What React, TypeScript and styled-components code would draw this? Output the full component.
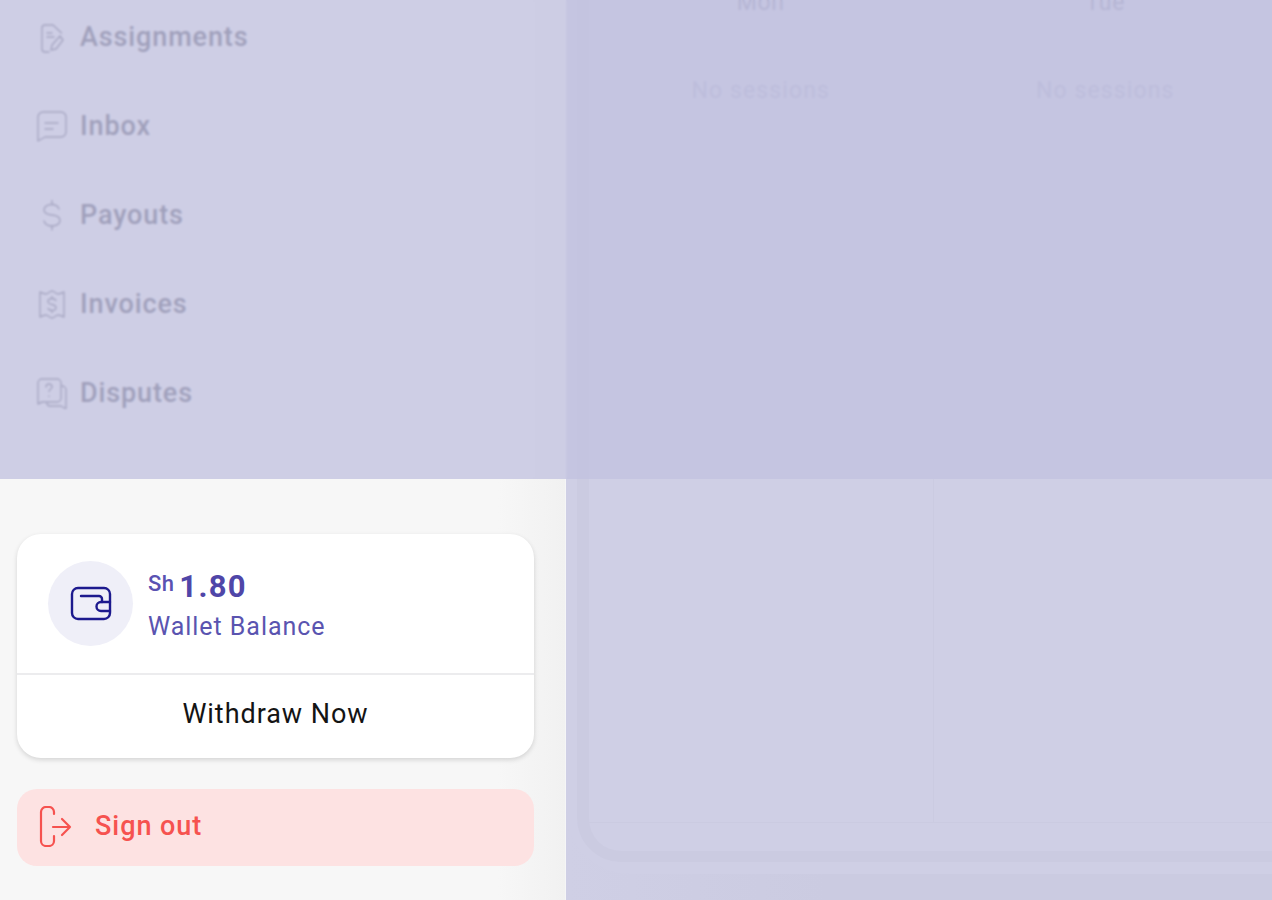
import React from 'react';
import styled, { createGlobalStyle } from 'styled-components';

const GlobalStyle = createGlobalStyle`
  html, body {
    margin: 0;
    padding: 0;
    height: 100%;
    overflow: hidden;
    background: #cbcbe1;
  }
  * {
    box-sizing: border-box;
  }
`;

const Page = styled.div`
  position: relative;
  display: grid;
  grid-template-columns: 566px 1fr;
  width: 100%;
  height: 900px;
  overflow: hidden;
  font-family: Roboto, 'Liberation Sans', sans-serif;
`;

const TopScrim = styled.div`
  position: absolute;
  top: 0;
  left: 0;
  right: 0;
  height: 479px;
  background: rgba(194, 194, 224, 0.77);
  backdrop-filter: blur(1px);
`;

const Sidebar = styled.aside`
  display: flex;
  flex-direction: column;
  height: 900px;
  background: linear-gradient(90deg, #f7f7f7 88%, #f1f1f1 99.8%, #f8f8fb 100%);
`;

const NavList = styled.nav`
  display: flex;
  flex-direction: column;
  justify-content: flex-end;
  height: 479px;
  padding: 0 0 42px 36px;
  overflow: hidden;
  flex-shrink: 0;
`;

const NavItem = styled.div`
  display: flex;
  align-items: center;
  gap: 12px;
  height: 89px;
  flex-shrink: 0;
  color: #2f2f42;
  font-size: 27px;
  font-weight: 500;
  letter-spacing: 0.88px;
  svg {
    width: 32px;
    height: 32px;
    flex-shrink: 0;
    fill: none;
    stroke: #4a4a5e;
    stroke-width: 1.4;
    stroke-linecap: round;
    stroke-linejoin: round;
  }
`;

const SidebarFooter = styled.div`
  display: flex;
  flex-direction: column;
  gap: 31px;
  padding: 55px 32px 0 17px;
`;

const WalletCard = styled.div`
  display: flex;
  flex-direction: column;
  height: 224px;
  background: #fff;
  border-radius: 24px;
  box-shadow: 0 2px 5px rgba(0, 0, 0, 0.14);
`;

const WalletRow = styled.div`
  display: flex;
  align-items: center;
  gap: 15px;
  height: 141px;
  padding: 0 31px 1px;
  border-bottom: 2px solid #ececee;
`;

const WalletBadge = styled.div`
  display: flex;
  align-items: center;
  justify-content: center;
  width: 85px;
  height: 85px;
  border-radius: 50%;
  background: #efeff8;
  svg {
    width: 42px;
    height: 42px;
    fill: none;
    stroke: #1d1a8e;
    stroke-width: 2.4;
    stroke-linecap: round;
    stroke-linejoin: round;
  }
`;

const WalletText = styled.div`
  display: flex;
  flex-direction: column;
  gap: 7px;
  margin-top: 4px;
`;

const Amount = styled.div`
  display: flex;
  align-items: flex-start;
  gap: 5px;
  color: #4f46a8;
  height: 36px;
`;

const Currency = styled.span`
  font-size: 22px;
  line-height: 30px;
  font-weight: 500;
  letter-spacing: 0.4px;
  color: #5a52b2;
`;

const Figure = styled.span`
  font-size: 31px;
  line-height: 36px;
  font-weight: 700;
  letter-spacing: 1.3px;
`;

const WalletLabel = styled.div`
  color: #5a54b0;
  font-size: 25px;
  line-height: 30px;
  letter-spacing: 0.95px;
`;

const WithdrawButton = styled.button`
  flex: 1;
  border: 0;
  background: transparent;
  color: #141414;
  font-family: inherit;
  font-size: 27px;
  letter-spacing: 0.95px;
  padding: 0 0 6px;
`;

const SignOutButton = styled.button`
  display: flex;
  align-items: center;
  gap: 23px;
  height: 77px;
  padding: 0 0 3px 22px;
  border: 0;
  border-radius: 20px;
  background: #fde2e2;
  color: #f6524f;
  font-family: inherit;
  font-size: 27px;
  font-weight: 500;
  letter-spacing: 0.95px;
  svg {
    width: 33px;
    height: 41px;
    fill: none;
    stroke: #f6524f;
    stroke-width: 2.2;
    stroke-linecap: round;
    stroke-linejoin: round;
  }
`;

const Main = styled.main`
  min-width: 0;
  height: 900px;
  background: linear-gradient(90deg, #cfcfe5 0, #cbcbe1 260px);
  overflow: hidden;
`;

const Panel = styled.div`
  height: 874px;
  padding: 0 0 12px 11px;
  background: #cfcfe5;
  border-bottom-left-radius: 64px;
`;

const CalendarFrame = styled.div`
  height: 100%;
  padding: 0 0 11px 12px;
  background: #cbcbe1;
  border-bottom-left-radius: 44px;
`;

const Calendar = styled.div`
  display: flex;
  flex-direction: column;
  height: 100%;
  padding-bottom: 28px;
  background: #cfcfe5;
  border-bottom-left-radius: 32px;
`;

const WeekGrid = styled.div`
  flex: 1;
  display: grid;
  grid-template-columns: repeat(3, 344.5px);
  grid-template-rows: 33px 1fr;
  border-bottom: 1px solid #cbcbe1;
`;

const DayHeader = styled.div`
  display: flex;
  justify-content: center;
  align-items: flex-end;
  color: #8a8aaa;
  font-size: 23px;
  letter-spacing: 0.7px;
  line-height: 28px;
  padding-bottom: 15px;
  border-bottom: 1px solid #cbcbe1;
  border-right: 1px solid #cbcbe1;
`;

const DayCell = styled.div`
  display: flex;
  justify-content: center;
  padding-top: 45px;
  color: #ababcb;
  font-size: 23px;
  line-height: 26px;
  letter-spacing: 1.1px;
  border-right: 1px solid #cbcbe1;
`;

const AssignmentsIcon = () => (
  <svg viewBox="0 0 32 32">
    <path d="M13 31H9a3 3 0 0 1-3-3V7a3 3 0 0 1 3-3h8l8.500 8" />
    <path d="M11 12h5M11 16h7" />
    <path d="M24 15l-8 9-1 5 5-1 7-9z" />
  </svg>
);

const InboxIcon = () => (
  <svg viewBox="0 0 32 32">
    <path d="M7 2h18a5 5 0 0 1 5 5v15a5 5 0 0 1-5 5H9l-7 4V7a5 5 0 0 1 5-5z" />
    <path d="M9 13h13M9 19h8" />
  </svg>
);

const DollarIcon = () => (
  <svg viewBox="0 0 32 32">
    <path d="M23 10c-1-3-4-4.500-7.500-4.500C11 5.500 8 8 8 11s3 4.500 8 5 8 2.500 8 5.500-3 5.500-8 5.500c-4 0-7-2-8-5" />
    <path d="M16 1.500v4M16 27v4" />
  </svg>
);

const InvoiceIcon = () => (
  <svg viewBox="0 0 32 32">
    <path d="M4 4c2 1 4 2 6 2s4-3 6-3 4 3 6 3 4-1 6-2v25c-2-1-4-2-6-2s-4 3-6 3-4-3-6-3-4 1-6 2z" />
    <path d="M20 12.500c-1-1.500-2.500-2-4-2-2.500 0-4 1.200-4 3s1.500 2.500 4 3 4 1.200 4 3-1.500 3-4 3c-1.500 0-3-.5-4-2" />
    <path d="M16 8.500v2M16 22.500v2" />
  </svg>
);

const DisputesIcon = () => (
  <svg viewBox="0 0 32 32">
    <path d="M6 2h15a4 4 0 0 1 4 4v15a4 4 0 0 1-4 4H6l-4 2V6a4 4 0 0 1 4-4z" />
    <path d="M26 9a4 4 0 0 1 4 4v19l-5-3H14a3 3 0 0 1-3-3" />
    <path d="M10 10c0-4 6-4 6 0 0 2-3 2-3 4.500M13 19v.5" />
  </svg>
);

const WalletIcon = () => (
  <svg viewBox="0 0 42 42">
    <path d="M8 6h26a6 6 0 0 1 6 6v19a6 6 0 0 1-6 6H8a6 6 0 0 1-6-6V12a6 6 0 0 1 6-6z" />
    <path d="M11 14h18a3 3 0 0 1 3 3v3" />
    <path d="M40 20h-9a4.500 4.500 0 0 0 0 9h9" />
  </svg>
);

const SignOutIcon = () => (
  <svg viewBox="0 0 33 41">
    <path d="M15 8V6a5 5 0 0 0-5-5H7a5 5 0 0 0-5 5v29a5 5 0 0 0 5 5h3a5 5 0 0 0 5-5v-5" />
    <path d="M14 21h17M23 13l8 8-8 8" />
  </svg>
);

const navItems = [
  { label: 'Assignments', icon: <AssignmentsIcon /> },
  { label: 'Inbox', icon: <InboxIcon /> },
  { label: 'Payouts', icon: <DollarIcon /> },
  { label: 'Invoices', icon: <InvoiceIcon /> },
  { label: 'Disputes', icon: <DisputesIcon /> },
];

const days = ['Mon', 'Tue', 'Wed'];

const App: React.FC = () => (
  <Page>
    <GlobalStyle />
    <Sidebar>
      <NavList>
        {navItems.map((item) => (
          <NavItem key={item.label}>
            {item.icon}
            {item.label}
          </NavItem>
        ))}
      </NavList>
      <SidebarFooter>
        <WalletCard>
          <WalletRow>
            <WalletBadge>
              <WalletIcon />
            </WalletBadge>
            <WalletText>
              <Amount>
                <Currency>Sh</Currency>
                <Figure>1.80</Figure>
              </Amount>
              <WalletLabel>Wallet Balance</WalletLabel>
            </WalletText>
          </WalletRow>
          <WithdrawButton>Withdraw Now</WithdrawButton>
        </WalletCard>
        <SignOutButton>
          <SignOutIcon />
          Sign out
        </SignOutButton>
      </SidebarFooter>
    </Sidebar>
    <Main>
      <Panel>
        <CalendarFrame>
          <Calendar>
            <WeekGrid>
              {days.map((day) => (
                <DayHeader key={day}>{day}</DayHeader>
              ))}
              {days.map((day) => (
                <DayCell key={day}>No sessions</DayCell>
              ))}
            </WeekGrid>
          </Calendar>
        </CalendarFrame>
      </Panel>
    </Main>
    <TopScrim />
  </Page>
);

export default App;
